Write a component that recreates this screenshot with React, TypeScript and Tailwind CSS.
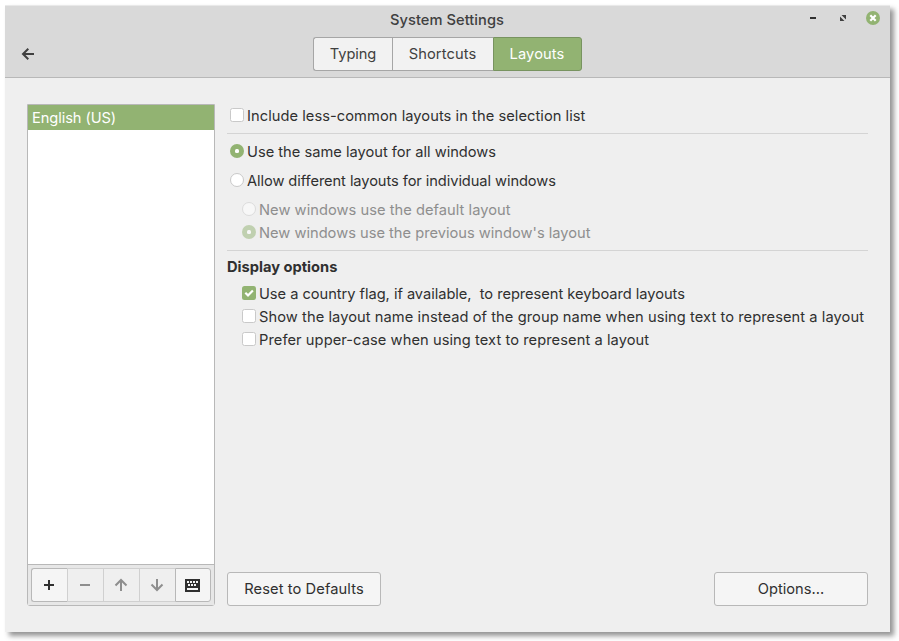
import type { ReactNode } from "react";

type MarkKind = "check" | "radio";

function Mark({ kind, on, dim }: { kind: MarkKind; on?: boolean; dim?: boolean }) {
  const shape = kind === "radio" ? "rounded-full" : "rounded-[2.5px]";
  const tone = on ? "bg-[#92b372]" : "border border-[#c9c9c9] bg-white";
  return (
    <span className={`flex size-[14px] shrink-0 items-center justify-center ${shape} ${tone} ${dim ? "opacity-50" : ""}`}>
      {on && kind === "radio" && <span className="size-[4px] rounded-[1.5px] bg-white" />}
      {on && kind === "check" && (
        <svg width="14" height="14" viewBox="0 0 14 14" fill="none" stroke="#fff" strokeWidth="2.2">
          <path d="M3.3 6.8 6 9.4 10.9 4.4" />
        </svg>
      )}
    </span>
  );
}

function Choice({ kind, on, dim, className, text }: { kind: MarkKind; on?: boolean; dim?: boolean; className: string; text: string }) {
  return (
    <label className={`flex h-[22px] items-center gap-[3px] whitespace-pre ${dim ? "text-[#8e8e8e]" : ""} ${className}`}>
      <Mark kind={kind} on={on} dim={dim} />
      <span className="relative top-px">{text}</span>
    </label>
  );
}

function ToolButton({ className, children }: { className: string; children: ReactNode }) {
  return <button className={`flex h-[34px] items-center justify-center border ${className}`}>{children}</button>;
}

export default function App() {
  return (
    <div className="h-[641px] w-[899px] overflow-hidden bg-white pt-[5px] pl-[5px] font-['Inter','Noto_Sans',sans-serif] text-[14.67px] leading-[22px] text-[#303030]">
      <div className="flex h-[627px] w-[885px] flex-col bg-[#efefef] shadow-[4px_4px_5px_rgba(0,0,0,0.42)]">
        <header className="h-[73px] shrink-0 border-t border-b border-t-[#e9e9e9] border-b-[#b8b8b8] bg-[#d9d9d9] text-[#404040]">
          <div className="grid h-[27px] grid-cols-[1fr_auto_1fr] items-center">
            <span />
            <h1 className="pr-px font-medium tracking-[0.05px]">System Settings</h1>
            <svg className="justify-self-end" width="90" height="27" viewBox="0 0 90 27">
              <path d="M10 11h6v2h-6z" fill="#303030" />
              <path d="M41.500 9H46v4.500zM40 10.500V15h4.500z" fill="#404040" />
              <circle cx="73" cy="12" r="7" fill="#92b372" />
              <path d="m70.300 9.300 5.400 5.400m0-5.400-5.400 5.400" stroke="#fff" strokeWidth="2.200" />
            </svg>
          </div>
          <div className="grid grid-cols-[308px_269px_1fr] pt-[4px]">
            <button className="flex h-[34px] items-center pl-[16px]" aria-label="Back">
              <svg width="14" height="14" viewBox="0 0 14 14" fill="none" stroke="#404040" strokeWidth="2">
                <path d="M13 7H2.500M7.300 1.700 2 7l5.300 5.300" />
              </svg>
            </button>
            <nav className="flex h-[34px]">
              <button className="w-[79px] rounded-l-[3px] border border-r-0 border-[#a6a6a6] bg-[#f2f2f2] tracking-[-0.1px]">Typing</button>
              <button className="w-[101px] border border-r-0 border-[#a6a6a6] bg-[#f2f2f2] pr-px tracking-[0.1px]">Shortcuts</button>
              <button className="w-[89px] rounded-r-[3px] border border-[#789360] bg-[#92b372] pr-px tracking-[0.1px] text-white">Layouts</button>
            </nav>
          </div>
        </header>

        <main className="flex grow gap-[12px] px-[22px] pt-[26px] pb-[26px]">
          <aside className="flex w-[188px] shrink-0 flex-col rounded-b-[3px] border border-[#b8b8b8] bg-white">
            <div className="h-[25px] bg-[#92b372] pl-[4px] leading-[26px] tracking-[-0.08px] text-white">English (US)</div>
            <div className="grow" />
            <div className="flex h-[41px] border-t border-[#b8b8b8] bg-[#e7e7e7] px-[3px] pt-[3px]">
              <ToolButton className="w-[36px] rounded-l-[3px] border-r-0 border-[#b8b8b8] bg-[#f5f5f5] pr-[2px]">
                <svg width="14" height="14" viewBox="0 0 14 14"><path d="M2 6h4V2h2v4h4v2H8v4H6V8H2z" fill="#303030" /></svg>
              </ToolButton>
              <ToolButton className="w-[36px] border-r-0 border-[#d0d0d0] bg-[#efefef] pr-[2px]">
                <svg width="14" height="14" viewBox="0 0 14 14"><path d="M2 6h10v2H2z" fill="#8e8e8e" /></svg>
              </ToolButton>
              <ToolButton className="w-[36px] border-r-0 border-[#d0d0d0] bg-[#efefef] pr-[2px]">
                <svg width="14" height="14" viewBox="0 0 14 14" fill="none" stroke="#8e8e8e" strokeWidth="2"><path d="M7 13V2.500M1.500 7.500 7 2l5.500 5.500" /></svg>
              </ToolButton>
              <ToolButton className="w-[36px] border-r-0 border-[#d0d0d0] bg-[#efefef] pr-[2px]">
                <svg width="14" height="14" viewBox="0 0 14 14" fill="none" stroke="#8e8e8e" strokeWidth="2"><path d="M7 1v10.500M1.500 6.500 7 12l5.500-5.500" /></svg>
              </ToolButton>
              <ToolButton className="w-[36px] rounded-r-[3px] border-[#b8b8b8] bg-[#f5f5f5]">
                <svg width="16" height="14" viewBox="0 0 16 14" shapeRendering="crispEdges">
                  <rect y="1" width="15" height="13" rx="1" fill="#303030" />
                  <path d="M2 3h2v2H2zm3 0h2v2H5zm3 0h2v2H8zm3 0h2v2h-2zM3 6h2v2H3zm3 0h2v2H6zm3 0h2v2H9zM2 10h11v2H2z" fill="#f5f5f5" />
                </svg>
              </ToolButton>
            </div>
          </aside>

          <section className="flex w-[641px] flex-col">
            <Choice kind="check" className="pl-[3px] tracking-[0.055px]" text="Include less-common layouts in the selection list" />
            <hr className="mt-[7px] border-t border-[#d4d4d4]" />
            <Choice kind="radio" on className="mt-[6px] pl-[3px]" text="Use the same layout for all windows" />
            <Choice kind="radio" className="mt-[7px] pl-[3px] tracking-[-0.08px]" text="Allow different layouts for individual windows" />
            <Choice kind="radio" dim className="mt-[7px] pl-[15px] tracking-[0.04px]" text="New windows use the default layout" />
            <Choice kind="radio" on dim className="mt-px pl-[15px]" text="New windows use the previous window's layout" />
            <hr className="mt-[7px] border-t border-[#d4d4d4]" />
            <h2 className="mt-[5px] font-bold">Display options</h2>
            <Choice kind="check" on className="mt-[4px] pl-[15px] tracking-[-0.035px]" text="Use a country flag, if available,  to represent keyboard layouts" />
            <Choice kind="check" className="mt-px pl-[15px] tracking-[0.068px]" text="Show the layout name instead of the group name when using text to represent a layout" />
            <Choice kind="check" className="mt-px pl-[15px] tracking-[0.07px]" text="Prefer upper-case when using text to represent a layout" />
            <div className="mt-auto flex justify-between">
              <button className="h-[34px] w-[154px] rounded-[3px] border border-[#b8b8b8] bg-[#f5f5f5] tracking-[0.1px]">Reset to Defaults</button>
              <button className="h-[34px] w-[154px] rounded-[3px] border border-[#b8b8b8] bg-[#f5f5f5]">Options...</button>
            </div>
          </section>
        </main>
      </div>
    </div>
  );
}
